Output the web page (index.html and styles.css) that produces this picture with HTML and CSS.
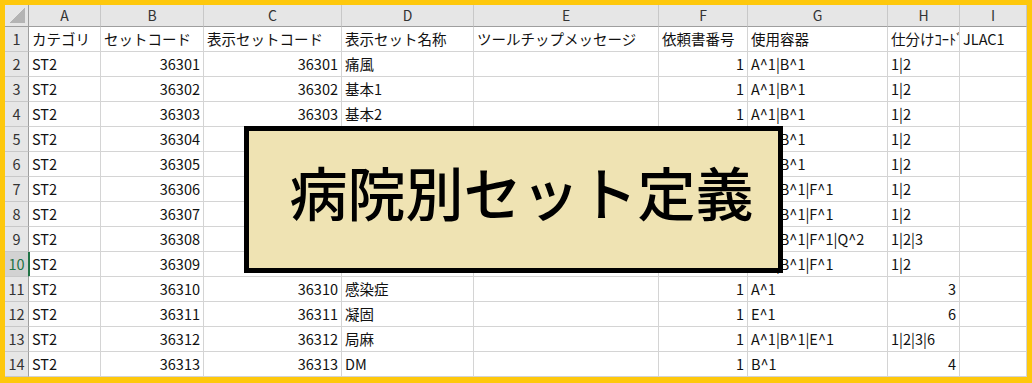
FILE: index.html
```html
<!DOCTYPE html>
<html lang="ja">
<head>
<meta charset="utf-8">
<title>病院別セット定義</title>
<link rel="stylesheet" href="styles.css">
</head>
<body>
<div class="sheet">
  <div class="grid">
    <div class="corner"></div>
    <div class="ch">A</div><div class="ch">B</div><div class="ch">C</div><div class="ch">D</div><div class="ch">E</div><div class="ch">F</div><div class="ch">G</div><div class="ch">H</div><div class="ch">I</div>

    <div class="rh">1</div><div class="c">カテゴリ</div><div class="c">セットコード</div><div class="c">表示セットコード</div><div class="c">表示セット名称</div><div class="c">ツールチップメッセージ</div><div class="c">依頼書番号</div><div class="c">使用容器</div><div class="c clip">仕分けｺｰﾄﾞ</div><div class="c">JLAC1</div>

    <div class="rh">2</div><div class="c">ST2</div><div class="n">36301</div><div class="n">36301</div><div class="c">痛風</div><div class="c"></div><div class="n">1</div><div class="c">A^1|B^1</div><div class="c">1|2</div><div class="c"></div>
    <div class="rh">3</div><div class="c">ST2</div><div class="n">36302</div><div class="n">36302</div><div class="c">基本1</div><div class="c"></div><div class="n">1</div><div class="c">A^1|B^1</div><div class="c">1|2</div><div class="c"></div>
    <div class="rh">4</div><div class="c">ST2</div><div class="n">36303</div><div class="n">36303</div><div class="c">基本2</div><div class="c"></div><div class="n">1</div><div class="c">A^1|B^1</div><div class="c">1|2</div><div class="c"></div>
    <div class="rh">5</div><div class="c">ST2</div><div class="n">36304</div><div class="n"></div><div class="c"></div><div class="c"></div><div class="n"></div><div class="c">A^1|B^1</div><div class="c">1|2</div><div class="c"></div>
    <div class="rh">6</div><div class="c">ST2</div><div class="n">36305</div><div class="n"></div><div class="c"></div><div class="c"></div><div class="n"></div><div class="c">A^1|B^1</div><div class="c">1|2</div><div class="c"></div>
    <div class="rh">7</div><div class="c">ST2</div><div class="n">36306</div><div class="n"></div><div class="c"></div><div class="c"></div><div class="n"></div><div class="c">A^1|B^1|F^1</div><div class="c">1|2</div><div class="c"></div>
    <div class="rh">8</div><div class="c">ST2</div><div class="n">36307</div><div class="n"></div><div class="c"></div><div class="c"></div><div class="n"></div><div class="c">A^1|B^1|F^1</div><div class="c">1|2</div><div class="c"></div>
    <div class="rh">9</div><div class="c">ST2</div><div class="n">36308</div><div class="n"></div><div class="c"></div><div class="c"></div><div class="n"></div><div class="c">A^1|B^1|F^1|Q^2</div><div class="c">1|2|3</div><div class="c"></div>
    <div class="rh sel">10</div><div class="c selcell">ST2</div><div class="n">36309</div><div class="n"></div><div class="c"></div><div class="c"></div><div class="n"></div><div class="c">A^1|B^1|F^1</div><div class="c">1|2</div><div class="c"></div>
    <div class="rh">11</div><div class="c">ST2</div><div class="n">36310</div><div class="n">36310</div><div class="c">感染症</div><div class="c"></div><div class="n">1</div><div class="c">A^1</div><div class="n">3</div><div class="c"></div>
    <div class="rh">12</div><div class="c">ST2</div><div class="n">36311</div><div class="n">36311</div><div class="c">凝固</div><div class="c"></div><div class="n">1</div><div class="c">E^1</div><div class="n">6</div><div class="c"></div>
    <div class="rh">13</div><div class="c">ST2</div><div class="n">36312</div><div class="n">36312</div><div class="c">局麻</div><div class="c"></div><div class="n">1</div><div class="c">A^1|B^1|E^1</div><div class="c">1|2|3|6</div><div class="c"></div>
    <div class="rh">14</div><div class="c">ST2</div><div class="n">36313</div><div class="n">36313</div><div class="c">DM</div><div class="c"></div><div class="n">1</div><div class="c">B^1</div><div class="n">4</div><div class="c"></div>
  </div>
  <div class="banner">病院別セット定義</div>
</div>
</body>
</html>
```
FILE: styles.css
```css
html, body {
  margin: 0;
  padding: 0;
}
body {
  background: #fec80c;
  width: 1032px;
  height: 383px;
  box-sizing: border-box;
  padding: 5px 5px 6px 5px;
  font-family: "Noto Sans CJK JP", "Liberation Sans", sans-serif;
  font-size: 14.5px;
  color: #111;
}
.sheet {
  position: relative;
  width: 1022px;
  height: 372px;
  background: #fff;
  overflow: hidden;
}
.grid {
  display: grid;
  grid-template-columns: 24px 72px 103px 138px 132px 185px 89px 140px 72px 67px;
  grid-template-rows: 22px repeat(14, 25px);
}
.grid > div {
  box-sizing: border-box;
  white-space: nowrap;
}
.corner {
  background: #e6e6e6;
  border-right: 1px solid #9e9e9e;
  border-bottom: 1px solid #9e9e9e;
  position: relative;
}
.corner::after {
  content: "";
  position: absolute;
  right: 3px;
  bottom: 3px;
  width: 16px;
  height: 16px;
  background: linear-gradient(to bottom right, transparent 50%, #b4b4b4 50%);
}
.ch {
  background: #e6e6e6;
  color: #333;
  text-align: center;
  font-size: 14px;
  line-height: 20px;
  border-right: 1px solid #c8c8c8;
  border-bottom: 1px solid #9e9e9e;
}
.rh {
  background: #e6e6e6;
  color: #333;
  text-align: center;
  line-height: 24px;
  border-right: 1px solid #9e9e9e;
  border-bottom: 1px solid #c8c8c8;
}
.rh.sel {
  background: #d2d2d2;
  color: #217346;
  border-right-color: #217346;
}
.c, .n {
  line-height: 24px;
  padding: 0 3px;
  border-right: 1px solid #d4d4d4;
  border-bottom: 1px solid #d4d4d4;
}
.n {
  text-align: right;
  padding-right: 3px;
}
.clip {
  overflow: hidden;
}
.selcell {
  box-shadow: inset 1px 0 0 #217346;
}
.banner {
  position: absolute;
  left: 239px;
  top: 121px;
  width: 539px;
  height: 147px;
  box-sizing: border-box;
  border: 5px solid #000;
  background: #efe3b3;
  display: flex;
  align-items: center;
  justify-content: center;
  padding: 0 0 18px 16px;
  font-size: 58px;
  font-weight: 500;
  color: #000;
  letter-spacing: 0;
}
```
